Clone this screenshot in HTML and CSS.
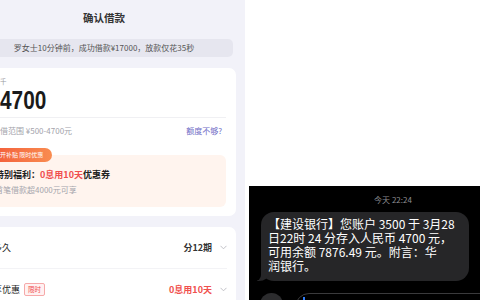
FILE: index.html
```html
<!DOCTYPE html>
<html lang="zh-CN">
<head>
<meta charset="utf-8">
<link rel="stylesheet" href="styles.css">
</head>
<body>
<div class="screen">
  <div class="app">
    <div class="phone">
      <div class="title">确认借款</div>
      <div class="notice">罗女士10分钟前，成功借款¥17000，放款仅花35秒</div>
      <div class="card amount-card">
        <div class="label">千</div>
        <div class="amount"><span class="yen">¥</span><span class="num">4700</span></div>
        <div class="divider"></div>
        <div class="range"><span>可借范围 ¥500-4700元</span><span class="more">额度不够?</span></div>
        <div class="promo">
          <div class="badge">新开补贴 限时优惠</div>
          <div class="promo-box">
            <div class="promo-title">特别福利：<em>0息用10天</em>优惠券</div>
            <div class="promo-sub">首笔借款超4000元可享</div>
          </div>
        </div>
      </div>
      <div class="card rows-card">
        <div class="row">
          <span class="key">借多久</span>
          <span class="val">分12期<svg class="chev" viewBox="0 0 8 5"><polyline points="0.6,0.6 4,4 7.4,0.6" fill="none" stroke="#b9b9c0" stroke-width="1"/></svg></span>
        </div>
        <div class="row">
          <span class="key">专享优惠<span class="tag">限时</span></span>
          <span class="val red">0息用10天<svg class="chev" viewBox="0 0 8 5"><polyline points="0.6,0.6 4,4 7.4,0.6" fill="none" stroke="#b9b9c0" stroke-width="1"/></svg></span>
        </div>
      </div>
    </div>
  </div>
  <div class="side">
    <div class="sms">
      <div class="time">今天 22:24</div>
      <div class="bubble">
        <div class="line">【建设银行】您账户 3500 于 3月28</div>
        <div class="line">日22时 24 分存入人民币 4700 元，</div>
        <div class="line">可用余额 7876.49 元。附言：华</div>
        <div class="line">润银行。</div>
      </div>
      <div class="composer">
        <div class="circle"></div>
        <div class="input"></div>
      </div>
    </div>
  </div>
</div>
</body>
</html>
```
FILE: styles.css
```css
* { box-sizing: border-box; margin: 0; padding: 0; }
html, body { width: 480px; height: 300px; overflow: hidden; }
body { font-family: "Noto Sans CJK SC", "Noto Sans", sans-serif; background: #fff; color: #222; }

.screen { display: flex; width: 480px; height: 300px; }

.app { width: 245px; flex: none; background: #f2f2f9; overflow: hidden; }
.phone { width: 280px; margin-left: -36px; }

.title { height: 39px; line-height: 36px; text-align: center; font-size: 10.5px; font-weight: 700; color: #333; }

.notice { margin: 0 11px; height: 18px; line-height: 18px; border-radius: 5px; background: #e6e6ef; text-align: center; font-size: 8px; color: #555; white-space: nowrap; }

.card { background: #fff; border-radius: 7px; margin: 0 8px; }

.amount-card { margin-top: 11px; padding: 8px 10px 9px 20px; }
.label { font-size: 6.5px; line-height: 10px; color: #9a9aa2; padding-left: 8px; }
.amount { height: 28px; line-height: 28px; font-family: "Liberation Sans", sans-serif; font-weight: 700; font-size: 26px; color: #1a1a1a; white-space: nowrap; }
.yen { display: inline-block; width: 8px; overflow: hidden; font-size: 14px; vertical-align: top; }
.num { display: inline-block; transform: scaleX(0.8); transform-origin: left center; }
.divider { height: 1px; background: #f0f0f3; margin-top: 3px; }
.range { display: flex; justify-content: space-between; margin-top: 8px; font-size: 8px; line-height: 10px; color: #a3a3ab; white-space: nowrap; }
.more { color: #6f6cc6; padding-right: 4px; }

.promo { display: flex; flex-direction: column; align-items: flex-start; margin-top: 12px; }
.badge { position: relative; z-index: 1; height: 14px; line-height: 14px; padding: 0 9px 0 2px; border-radius: 7px; background: linear-gradient(90deg, #f35d3a, #f98c50); color: #fff; font-size: 6px; margin-bottom: -7px; white-space: nowrap; }
.promo-box { align-self: stretch; background: #fff4ee; border-radius: 6px; padding: 14px 0 12px 3px; }
.promo-title { font-size: 9px; line-height: 12px; font-weight: 700; color: #222; white-space: nowrap; }
.promo-title em { font-style: normal; color: #f04d4d; }
.promo-sub { margin-top: 4px; font-size: 8px; line-height: 10px; color: #a5a5ad; white-space: nowrap; }

.rows-card { margin-top: 11px; padding: 0 9px 0 12px; }
.row { height: 41px; display: flex; align-items: center; justify-content: space-between; font-size: 9px; color: #262626; }
.row + .row { border-top: 1px solid #f3f3f6; }
.key { display: flex; align-items: center; white-space: nowrap; }
.val { display: flex; align-items: center; font-weight: 700; white-space: nowrap; color: #333; }
.val.red { color: #f0504d; font-weight: 600; }
.chev { margin-left: 8px; width: 7px; height: 5px; }
.tag { margin-left: 4px; font-size: 6.5px; line-height: 9px; padding: 1px 3px; border: 1px solid #f6a9a9; border-radius: 2px; background: #fff1f1; color: #f04d4d; }

.side { flex: 1; background: #fff; padding: 186px 0 0 4px; overflow: hidden; }
.sms { width: 288px; height: 114px; background: #000; padding-top: 9px; }
.time { text-align: center; font-size: 8px; line-height: 10px; color: #8e8e93; margin-bottom: 7px; }
.bubble { position: relative; margin-left: 12px; width: 208px; background: #262628; border-radius: 13px; padding: 5px 6px 8px 7px; color: #fff; font-size: 12px; line-height: 14px; }
.bubble::before { content: ""; position: absolute; left: -4px; bottom: 0; width: 12px; height: 14px; background: #262628; border-bottom-right-radius: 10px 8px; }
.bubble::after { content: ""; position: absolute; left: -10px; bottom: 0; width: 10px; height: 14px; background: #000; border-bottom-right-radius: 6px; }
.line { position: relative; z-index: 1; white-space: nowrap; }

.composer { display: flex; gap: 12px; margin: 12px 0 0 11px; }
.circle { width: 23px; height: 23px; border-radius: 50%; background: #2c2c2e; flex: none; }
.input { position: relative; flex: 1; height: 28px; border: 1px solid #3a3a3c; border-radius: 14px; }
.input::before { content: ""; position: absolute; left: 7px; top: 3px; width: 1.5px; height: 12px; background: #2f7cf6; }
```
